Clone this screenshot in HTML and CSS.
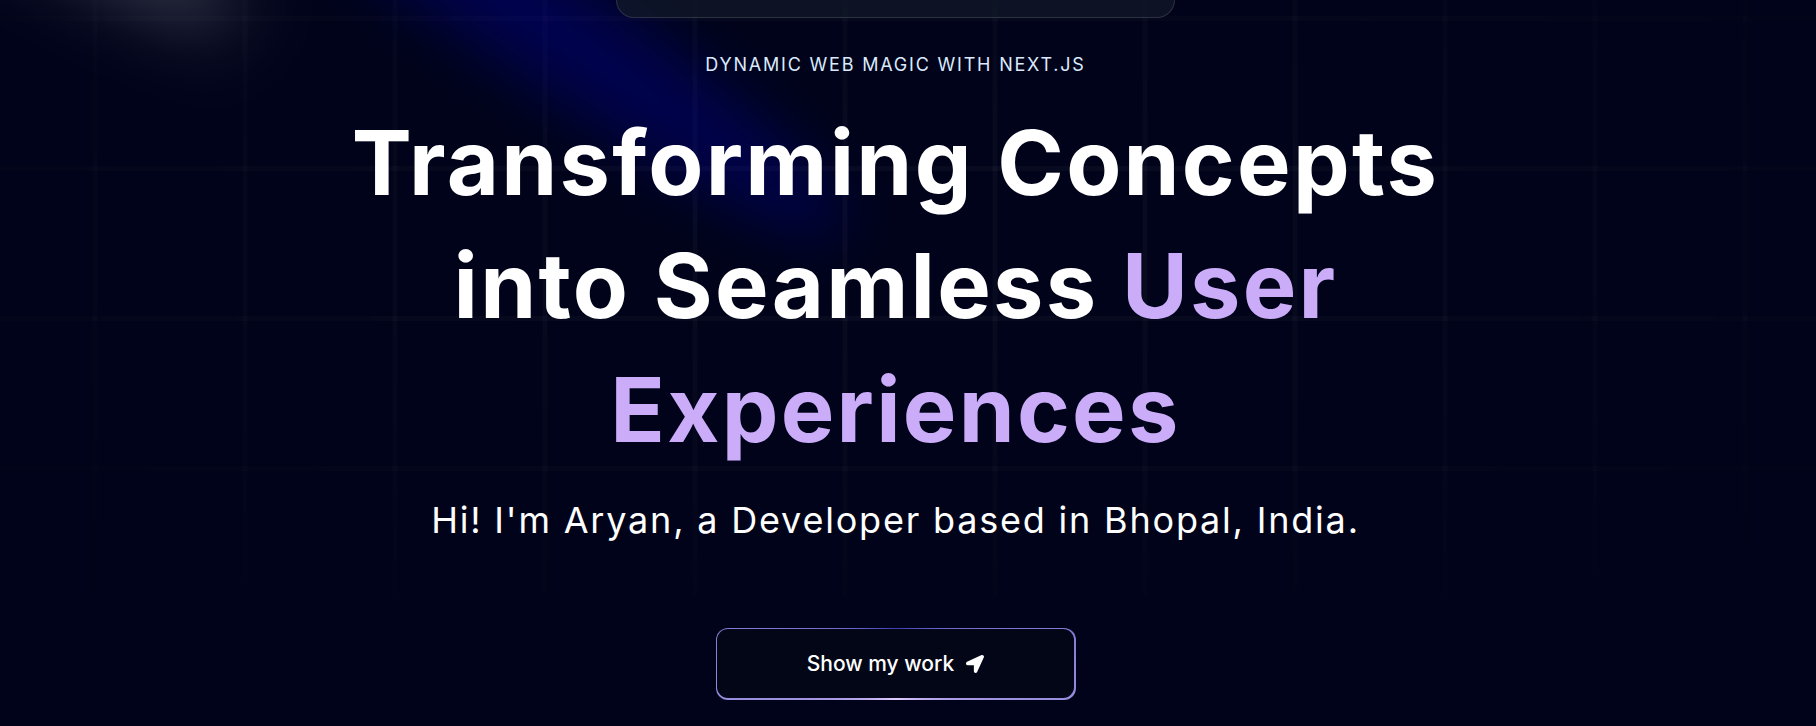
FILE: index.html
```
<!DOCTYPE html>
<html lang="en">
<head>
<meta charset="utf-8">
<title>Aryan — Portfolio</title>
<link rel="stylesheet" href="styles.css">
</head>
<body>
<main class="page">
  <div class="grid-bg"></div>
  <svg class="spotlights" viewBox="0 0 1816 726" width="1816" height="726" aria-hidden="true">
    <defs>
      <filter id="blurWhite" filterUnits="userSpaceOnUse" x="-1200" y="-1200" width="3000" height="3000">
        <feGaussianBlur stdDeviation="38"/>
      </filter>
      <filter id="blurBlue" filterUnits="userSpaceOnUse" x="-1200" y="-1200" width="3000" height="3000">
        <feGaussianBlur stdDeviation="31"/>
      </filter>
    </defs>
    <ellipse cx="-165" cy="-255" rx="492" ry="70" transform="rotate(34.7 -165 -255)" fill="#ffffff" fill-opacity="0.21" filter="url(#blurWhite)"/>
    <ellipse cx="522" cy="8" rx="393" ry="55" transform="rotate(34.7 522 8)" fill="#0000ff" fill-opacity="0.23" filter="url(#blurBlue)"/>
  </svg>

  <nav class="floating-nav"></nav>

  <section class="hero">
    <p class="eyebrow">Dynamic Web Magic with Next.js</p>
    <h1 class="title">Transforming Concepts into Seamless <span class="accent">User Experiences</span></h1>
    <p class="subtitle">Hi! I'm Aryan, a Developer based in Bhopal, India.</p>
    <a class="magic-btn" href="#about">
      <span class="magic-inner">
        Show my work
        <svg class="btn-icon" viewBox="0 0 512 512" aria-hidden="true"><path d="M444.52 3.52L28.74 195.42c-47.97 22.39-31.98 92.75 19.19 92.75h175.91v175.91c0 51.17 70.36 67.17 92.75 19.19l191.9-415.78c15.99-38.39-25.59-79.97-63.97-63.97z" fill="currentColor"/></svg>
      </span>
    </a>
  </section>
</main>
</body>
</html>
```
FILE: styles.css
```
* { box-sizing: border-box; }

html, body {
  margin: 0;
  padding: 0;
  background: #000319;
  overflow: hidden;
}

body {
  font-family: Inter, "Noto Sans", "Liberation Sans", sans-serif;
  color: #ffffff;
}

.page {
  position: relative;
  width: 1816px;
  height: 726px;
  overflow: hidden;
  background: #000319;
  padding-right: 25px;
}

.grid-bg {
  position: absolute;
  left: 0;
  top: 0;
  width: 1816px;
  height: 595px;
  background-image:
    linear-gradient(to bottom, rgba(255,255,255,0.03) 4.7px, transparent 4.7px),
    linear-gradient(to left, rgba(255,255,255,0.03) 4.7px, transparent 4.7px);
  background-size: 150px 150px, 150px 150px;
  background-position: -52.5px 16px, -52.5px 16px;
  -webkit-mask-image: radial-gradient(ellipse 1284px 513px at 908px 232px, #000 20%, transparent 100%);
  mask-image: radial-gradient(ellipse 1284px 513px at 908px 232px, #000 20%, transparent 100%);
  z-index: 0;
}

.spotlights {
  position: absolute;
  left: 0;
  top: 0;
  overflow: visible;
  pointer-events: none;
  z-index: 1;
}

.floating-nav {
  position: absolute;
  left: 616px;
  top: -72px;
  width: 559px;
  height: 90px;
  border-radius: 18px;
  background: rgba(17, 25, 40, 0.75);
  border: 1.5px solid rgba(255, 255, 255, 0.125);
  z-index: 5;
}

.hero {
  position: relative;
  z-index: 3;
  display: flex;
  flex-direction: column;
  align-items: center;
  padding-top: 52.5px;
  text-align: center;
}

.eyebrow {
  margin: 0;
  font-size: 18px;
  line-height: 24px;
  letter-spacing: 0.1em;
  text-transform: uppercase;
  color: #dbeafe;
}

.title {
  margin: 24px 0;
  max-width: 1120px;
  font-size: 90px;
  line-height: 123.75px;
  font-weight: 700;
  letter-spacing: 0.025em;
  color: #ffffff;
}

.accent {
  color: #cbacf9;
}

.subtitle {
  margin: 0 0 24px;
  font-size: 36px;
  line-height: 48px;
  letter-spacing: 0.05em;
  color: #ffffff;
}

.magic-btn {
  margin-top: 60px;
  width: 360px;
  height: 72px;
  padding: 1.5px;
  border-radius: 12px;
  display: flex;
  text-decoration: none;
  background: conic-gradient(from 180deg at 50% 50%, #e2cbff 0%, #393bb2 50%, #e2cbff 100%);
}

.magic-inner {
  flex: 1;
  display: flex;
  align-items: center;
  justify-content: center;
  gap: 12px;
  border-radius: 11px;
  background: #020617;
  color: #ffffff;
  font-size: 21px;
  font-weight: 500;
}

.btn-icon {
  width: 18px;
  height: 18px;
}
```
